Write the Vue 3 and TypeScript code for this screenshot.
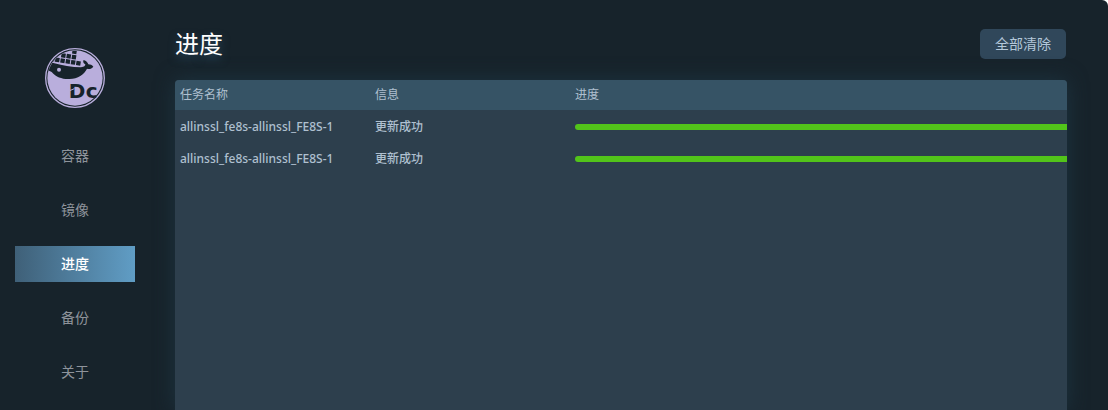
<script setup lang="ts">
import { ref } from 'vue'

interface Task {
  id: number
  name: string
  info: string
  percent: number
}

const menu: string[] = ['容器', '镜像', '进度', '备份', '关于']
const active = ref<string>('进度')

const tasks = ref<Task[]>([
  { id: 1, name: 'allinssl_fe8s-allinssl_FE8S-1', info: '更新成功', percent: 100 },
  { id: 2, name: 'allinssl_fe8s-allinssl_FE8S-1', info: '更新成功', percent: 100 },
])

function clearAll(): void {
  tasks.value = []
}
</script>

<template>
  <div class="app">
    <aside class="sidebar">
      <svg class="logo" viewBox="30 30 180 180" role="img" aria-label="Dc">
        <defs>
          <clipPath id="disc"><circle cx="120" cy="120" r="82" /></clipPath>
        </defs>
        <circle cx="120" cy="120" r="88" fill="#17232b" stroke="#b9aedc" stroke-width="4" />
        <circle cx="120" cy="120" r="83" fill="#b9aedc" />
        <g clip-path="url(#disc)" fill="#17232b">
          <path d="M34 66 L52 74 C80 82 112 87 138 88 C148 87 151 83 151 79 C145 75 143 71 146 66 C154 69 158 73 160 79 C166 79 171 81 175 86 C170 93 162 94 156 92 C148 109 128 122 104 123 C82 124 64 118 50 102 L34 94 Z" />
          <g transform="rotate(9 60 62)">
            <rect x="108" y="25" width="13" height="14" />
            <rect x="77" y="42" width="13" height="13" />
            <rect x="93" y="42" width="13" height="13" />
            <rect x="109" y="42" width="13" height="13" />
            <rect x="46" y="58" width="13" height="13" />
            <rect x="61" y="58" width="13" height="13" />
            <rect x="77" y="58" width="13" height="13" />
            <rect x="93" y="58" width="13" height="13" />
            <rect x="109" y="58" width="13" height="13" />
            <rect x="125" y="58" width="13" height="13" />
          </g>
        </g>
        <circle cx="72" cy="95" r="6" fill="#b9aedc" />
        <text class="logo-text" x="101" y="180">D</text>
        <text class="logo-text" x="152" y="180">c</text>
        <path d="M104 158 L118 152" stroke="#b9aedc" stroke-width="3" />
      </svg>
      <nav class="menu">
        <a
          v-for="item in menu"
          :key="item"
          href="#"
          class="menu-item"
          :class="{ active: item === active }"
          @click.prevent="active = item"
        >{{ item }}</a>
      </nav>
    </aside>

    <main class="content">
      <header class="topbar">
        <h1 class="title">进度</h1>
        <button type="button" class="clear" @click="clearAll">全部清除</button>
      </header>
      <section class="panel">
        <table class="tasks">
          <colgroup>
            <col class="col-name" />
            <col class="col-info" />
            <col />
          </colgroup>
          <thead>
            <tr>
              <th scope="col">任务名称</th>
              <th scope="col">信息</th>
              <th scope="col">进度</th>
            </tr>
          </thead>
          <tbody>
            <tr v-for="task in tasks" :key="task.id">
              <td>{{ task.name }}</td>
              <td>{{ task.info }}</td>
              <td class="progress-cell">
                <div class="track">
                  <div class="bar" :style="{ width: task.percent + '%' }"></div>
                </div>
              </td>
            </tr>
          </tbody>
        </table>
      </section>
    </main>
  </div>
</template>

<style>
body {
  background: #ffffff;
}
</style>

<style scoped>
.app {
  display: flex;
  height: 100vh;
  overflow: hidden;
  box-sizing: border-box;
  background: #17232b;
  border-radius: 0 6px 0 0;
  font-family: 'Noto Sans', 'Noto Sans CJK SC', sans-serif;
  font-size: 12px;
  color: #afc0d0;
}

.sidebar {
  flex: none;
  width: 150px;
  box-sizing: border-box;
  padding: 48px 15px 0;
}

.logo {
  display: block;
  width: 60px;
  height: 60px;
  margin: 0 auto 30px;
}

.logo-text {
  font-family: 'DejaVu Sans', sans-serif;
  font-size: 60px;
  font-weight: 700;
  fill: #17232b;
}

.menu {
  display: flex;
  flex-direction: column;
  gap: 18px;
}

.menu-item {
  height: 36px;
  line-height: 36px;
  text-align: center;
  font-size: 14px;
  color: #8e939b;
  text-decoration: none;
}

.menu-item.active {
  color: #ffffff;
  font-weight: 500;
  background: linear-gradient(to right, #3f6078, #609dc5);
}

.content {
  flex: 1;
  min-width: 0;
  display: flex;
  flex-direction: column;
  padding: 24px 41px 0 25px;
}

.topbar {
  display: flex;
  align-items: center;
  justify-content: space-between;
  height: 40px;
  margin-bottom: 16px;
}

.title {
  margin: 0;
  font-size: 24px;
  line-height: 40px;
  font-weight: 400;
  color: #ffffff;
  text-shadow: 0 4px 8px #2a4a60;
}

.clear {
  height: 30px;
  margin: 0 1px 0 0;
  padding: 0 15px;
  border: 0;
  border-radius: 5px;
  background: #30475a;
  color: #b4c8da;
  font-family: inherit;
  font-size: 14px;
  line-height: 30px;
  cursor: pointer;
}

.panel {
  flex: 1;
  overflow: hidden;
  border-radius: 4px 4px 0 0;
  background: #2d3f4d;
  box-shadow: 0 0 20px #1d3440;
}

.tasks {
  width: 100%;
  table-layout: fixed;
  border-collapse: collapse;
}

.col-name {
  width: 195px;
}

.col-info {
  width: 200px;
}

th,
td {
  padding: 0 5px;
  text-align: left;
  white-space: nowrap;
}

th {
  height: 28px;
  padding-bottom: 2px;
  font-weight: 400;
  background: #365365;
}

td {
  height: 32px;
  font-weight: 500;
}

.progress-cell {
  padding: 2px 0 0 5px;
  height: 30px;
}

.track {
  overflow: hidden;
  border-radius: 3px 0 0 3px;
}

.bar {
  height: 6px;
  background: #52c41a;
}
</style>
